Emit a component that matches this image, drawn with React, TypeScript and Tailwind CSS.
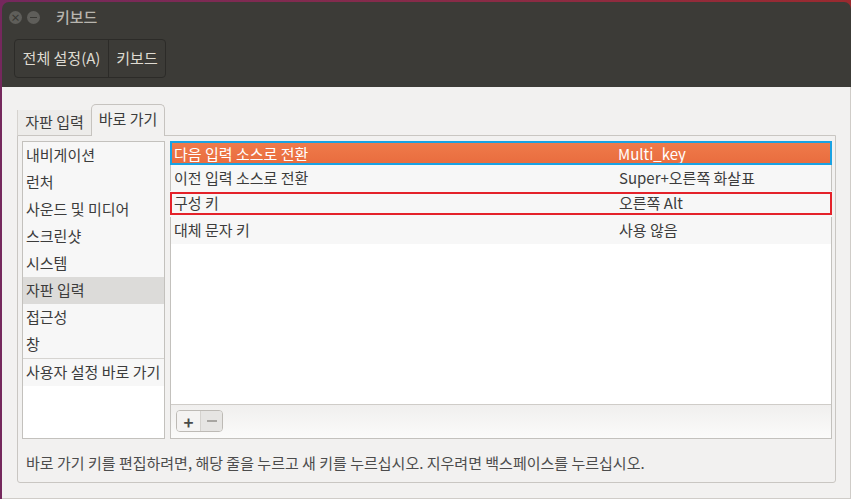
import React from 'react';

const font = { fontFamily: '"Noto Sans CJK KR", "Noto Sans", sans-serif' };

const sections = ['내비게이션', '런처', '사운드 및 미디어', '스크린샷', '시스템', '자판 입력', '접근성', '창'];

const App: React.FC = () => {
    return (
        <div className="w-[851px] h-[499px] overflow-hidden bg-linear-to-r from-[#75285d] to-[#9a2a2f] pl-[2px] pt-[2px]" style={font}>
            <div className="flex flex-col h-full rounded-t-[7px] overflow-hidden">
                {/* title bar + header toolbar */}
                <div className="h-[85px] shrink-0 bg-[#3c3b37]">
                    <div className="h-[31px] flex items-center pl-[7px]">
                        <div className="w-[13px] h-[13px] rounded-full bg-[#5f5e5a] flex items-center justify-center text-[#393834] text-[10px] leading-none font-bold">
                            ×
                        </div>
                        <div className="w-[13px] h-[13px] rounded-full bg-[#5f5e5a] ml-[5px] flex items-center justify-center">
                            <div className="w-[7px] h-[1.5px] bg-[#393834]" />
                        </div>
                        <span className="ml-[16px] text-[15px] text-[#b8b5ae] font-medium">키보드</span>
                    </div>
                    <div className="mt-[6px] ml-[12px] flex h-[39px] w-max rounded-[4px] border border-[#2c2b28] text-[15px] text-[#dfdbd2]">
                        <div className="w-[94px] flex items-center justify-center border-r border-[#2c2b28]">전체 설정(A)</div>
                        <div className="w-[56px] flex items-center justify-center">키보드</div>
                    </div>
                </div>

                {/* content */}
                <div className="flex-1 bg-[#f2f1f0] border-r border-b border-[#cfccc8] pl-[15px] pr-[14px] pt-[16px]">
                    {/* tabs */}
                    <div className="flex items-end h-[32px] text-[15px] text-[#3c3c3c]">
                        <div className="w-[74px] h-[25px] flex items-center justify-center bg-[#edecea] border-l border-[#d6d3cf]">자판 입력</div>
                        <div className="w-[74px] h-[32px] -mb-px flex items-center justify-center bg-[#f2f1f0] border border-b-0 border-[#c6c3bf] rounded-t-[5px] pb-[2px]">
                            바로 가기
                        </div>
                    </div>

                    {/* notebook page */}
                    <div className="h-[348px] border border-[#c9c6c2] rounded-b-[3px] pl-[4px] pr-[3px] pt-[5px] flex flex-col">
                        <div className="flex gap-[5px] h-[298px]">
                            {/* section list */}
                            <div className="w-[143px] h-full border border-[#c3c1bd] bg-white text-[15px] text-[#3c3c3c]">
                                {sections.map((s) => (
                                    <div
                                        key={s}
                                        className={
                                            s === '자판 입력'
                                                ? 'h-[27px] flex items-center pl-[3px] bg-[#dcdbd9]'
                                                : 'h-[27px] flex items-center pl-[3px] bg-[#f7f7f7]'
                                        }
                                    >
                                        {s}
                                    </div>
                                ))}
                                <div className="h-px bg-[#d6d4d1]" />
                                <div className="h-[27px] flex items-center pl-[3px] bg-[#f7f7f7] whitespace-nowrap">사용자 설정 바로 가기</div>
                            </div>

                            {/* shortcut list */}
                            <div className="flex-1 h-full border border-[#c3c1bd] flex flex-col">
                                <div className="h-[263px] bg-white border-b border-[#cfccc8] text-[15px] text-[#3c3c3c]">
                                    <div className="-mt-px -mx-px h-[24px] border-2 border-[#19a2e3] bg-linear-to-b from-[#ef7a4a] to-[#e96d3f] text-white flex overflow-hidden">
                                        <div className="pl-[2px] pt-[1px] leading-[20px] w-[446px]">다음 입력 소스로 전환</div>
                                        <div className="pt-[1px] leading-[20px]">Multi_key</div>
                                    </div>
                                    <div className="h-[26px] flex items-center bg-[#f7f7f7]">
                                        <div className="pl-[3px] w-[448px]">이전 입력 소스로 전환</div>
                                        <div>Super+오른쪽 화살표</div>
                                    </div>
                                    <div className="h-[26px] pt-px pb-[2px] bg-[#f7f7f7] -mx-px">
                                        <div className="h-full border-2 border-[#e4222a] flex items-center">
                                            <div className="pl-[2px] w-[447px]">구성 키</div>
                                            <div>오른쪽 Alt</div>
                                        </div>
                                    </div>
                                    <div className="h-[27px] flex items-center bg-[#f7f7f7]">
                                        <div className="pl-[3px] w-[448px]">대체 문자 키</div>
                                        <div>사용 않음</div>
                                    </div>
                                </div>
                                <div className="flex-1 bg-linear-to-b from-[#f0efee] to-[#fbfbfa] pl-[5px] pt-[5px]">
                                    <div className="flex h-[22px] w-[47px] rounded-[4px] border border-[#bdbab5] overflow-hidden">
                                        <div className="w-[24px] flex items-center justify-center bg-[#f4f3f2] border-r border-[#d4d2ce] text-[#4a4a4a] text-[17px] leading-none font-bold">
                                            +
                                        </div>
                                        <div className="flex-1 flex items-center justify-center bg-[#e6e5e3]">
                                            <div className="w-[10px] h-[2px] bg-[#a8a6a2]" />
                                        </div>
                                    </div>
                                </div>
                            </div>
                        </div>
                        <div className="pt-[14px] pl-[4px] text-[15px] leading-[20px] text-[#4c4c4c] whitespace-nowrap">
                            바로 가기 키를 편집하려면, 해당 줄을 누르고 새 키를 누르십시오. 지우려면 백스페이스를 누르십시오.
                        </div>
                    </div>
                </div>
            </div>
        </div>
    );
};

export default App;
